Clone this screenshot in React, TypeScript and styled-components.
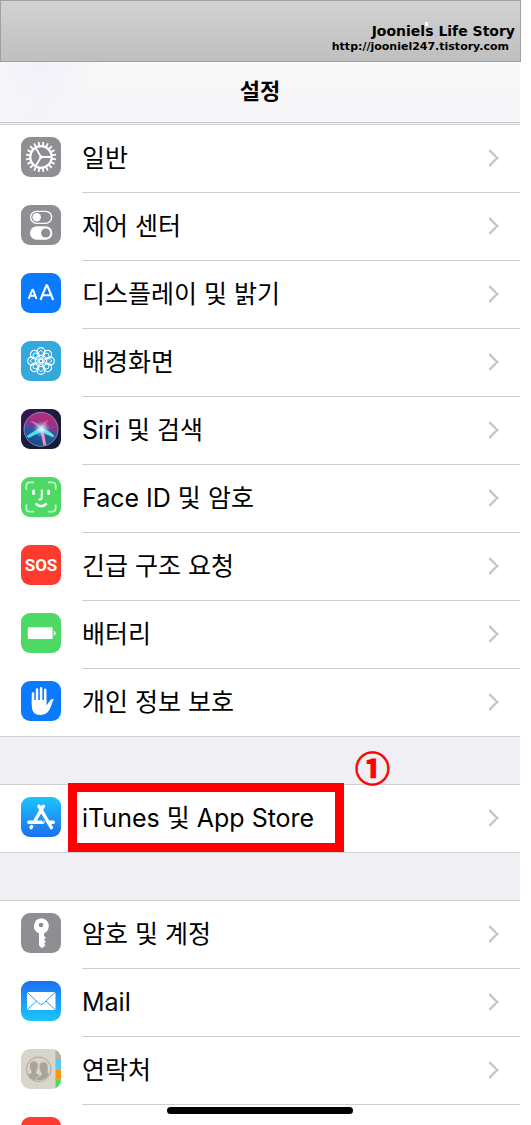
import React from "react";
import styled, { createGlobalStyle } from "styled-components";

const GlobalStyle = createGlobalStyle`
  * { box-sizing: border-box; }
  body {
    margin: 0;
    background: #ffffff;
    font-family: Inter, "Noto Sans CJK KR", sans-serif;
    color: #000000;
  }
`;

const Page = styled.div`
  height: 100vh;
  overflow: hidden;
  padding-right: 10px;
`;

const Banner = styled.header`
  height: 62px;
  padding: 22px 5px 0 0;
  border: 1px solid #a0a0a0;
  background: linear-gradient(#d2d2d2, #bfbfbf);
  font-family: "DejaVu Sans", sans-serif;
  font-weight: 700;
  text-align: right;
`;

const BlogName = styled.div`
  font-size: 14px;
  line-height: 17px;
`;

const Speck = styled.span`
  position: relative;
  &::before {
    content: "";
    position: absolute;
    top: -1px;
    left: 0;
    width: 3px;
    height: 4px;
    background: #ffffff;
  }
`;

const BlogUrl = styled.a`
  display: block;
  padding-right: 6px;
  font-size: 11px;
  line-height: 14px;
  color: inherit;
  text-decoration: none;
`;

const Screen = styled.main`
  position: relative;
  height: calc(100% - 62px);
  margin-right: 1px;
  overflow: hidden;
  background: #efeff4;
`;

const TitleBar = styled.div`
  display: flex;
  align-items: center;
  justify-content: center;
  height: 61px;
  padding-bottom: 2px;
  border-bottom: 1px solid #c9c8ce;
  background: radial-gradient(circle at 40px 0, #f2f0fb, rgba(246, 246, 248, 0) 60px), linear-gradient(#f9f9f9, #f5f5f8);
`;

const Title = styled.h1`
  margin: 0;
  font-size: 22px;
  line-height: 32px;
  font-weight: 700;
`;

const Groups = styled.div`
  display: flex;
  flex-direction: column;
  gap: 47px;
  padding-top: 1px;
`;

const Group = styled.ul`
  margin: 0;
  padding: 0;
  list-style: none;
  border: solid #d0cfd4;
  border-width: 1px 0;
  background: #ffffff;
`;

const Item = styled.li`
  position: relative;
`;

const RowLink = styled.a`
  display: flex;
  padding-left: 21px;
  gap: 21px;
  color: inherit;
  text-decoration: none;
`;

const IconTile = styled.svg`
  flex: none;
  width: 40px;
  height: 40px;
  margin-top: 12px;
  border-radius: 9px;
`;

const RowBody = styled.span`
  display: flex;
  flex: 1;
  align-items: center;
  justify-content: space-between;
  height: 68px;
  padding: 0 21px 2px 0;
  border-bottom: 1px solid #d0cfd4;
  ${Item}:last-child & {
    height: 67px;
    border-bottom: 0;
  }
`;

const Label = styled.span`
  font-size: 25px;
  line-height: 32px;
  white-space: nowrap;
`;

const Highlight = styled.span`
  position: absolute;
  top: -2px;
  left: 68px;
  width: 276px;
  height: 69px;
  border: 9px solid #ff0000;
`;

const StepMark = styled.span`
  position: absolute;
  top: -38px;
  left: 355px;
  color: #ff0000;
  font-family: "Noto Sans CJK KR", sans-serif;
  font-size: 35px;
  font-weight: 700;
  line-height: 40px;
  -webkit-text-stroke: 1px #ff0000;
`;

const HomeBar = styled.div`
  position: absolute;
  bottom: 11px;
  left: 50%;
  width: 186px;
  height: 7px;
  border-radius: 4px;
  background: #000000;
  transform: translateX(-50%);
`;

const Chevron = () => (
  <svg width="11" height="18" viewBox="0 0 11 18" fill="none" stroke="#c5c5ca" strokeWidth="2.4" aria-hidden="true">
    <path d="M1.3 1.2 9.3 9l-8 7.8" />
  </svg>
);

const spokes = (count: number) => Array.from({ length: count }, (_, i) => (360 / count) * i);

const Tile = ({ fill, children }: { fill: string; children?: React.ReactNode }) => (
  <IconTile viewBox="0 0 40 40" aria-hidden="true">
    <rect width="40" height="40" fill={fill} />
    {children}
  </IconTile>
);

const GeneralIcon = () => (
  <Tile fill="#8e8e93">
    <g stroke="#fff" fill="none">
      <circle cx="20" cy="20" r="10.8" strokeWidth="2.2" />
      {spokes(20).map((a) => (
        <path key={a} d="M20 9.5V4.800" strokeWidth="1.8" transform={`rotate(${a + 9} 20 20)`} />
      ))}
      <path d="M20 20h11M20 20l-5.5-9.5M20 20l-5.5 9.5" strokeWidth="1.8" />
      <circle cx="20" cy="20" r="1.2" fill="#fff" />
    </g>
  </Tile>
);

const ControlIcon = () => (
  <Tile fill="#8e8e93">
    <rect x="9.6" y="6.3" width="21" height="12" rx="6" fill="none" stroke="#fff" strokeWidth="1.3" />
    <circle cx="15.7" cy="12.3" r="4.2" fill="#fff" />
    <rect x="9" y="21.2" width="22.4" height="13.6" rx="6.8" fill="#fff" />
    <circle cx="24.7" cy="28" r="4.6" fill="#8e8e93" />
  </Tile>
);

const DisplayIcon = () => (
  <Tile fill="#0a7aff">
    <g fill="none" stroke="#fff" strokeLinejoin="round">
      <path d="M7.700 25.800 11.300 16.600h.6l3.600 9.200M9 22.800h5.200" strokeWidth="1.9" />
      <path d="M19.400 27 25.400 12.300h.8L32.200 27M21.400 22.200h8.800" strokeWidth="2.100" />
    </g>
  </Tile>
);

const WallpaperIcon = () => (
  <Tile fill="#34aadc">
    <g fill="none" stroke="#fff">
      {spokes(8).map((a) => (
        <g key={a} transform={`rotate(${a} 20 20)`}>
          <circle cx="20" cy="10.6" r="3.9" strokeWidth="1.2" />
          <ellipse cx="20" cy="14" rx="2.5" ry="4.4" strokeWidth="0.9" />
        </g>
      ))}
      <circle cx="20" cy="20" r="2" strokeWidth="1" />
    </g>
  </Tile>
);

const SiriIcon = () => (
  <Tile fill="url(#siriBase)">
    <defs>
      <linearGradient id="siriBase" x1="0" y1="0" x2="1" y2="1">
        <stop offset="0" stopColor="#431157" />
        <stop offset="0.5" stopColor="#1c1b3f" />
        <stop offset="1" stopColor="#121b35" />
      </linearGradient>
      <linearGradient id="siriOrb" x1="0.65" y1="0" x2="0.35" y2="1">
        <stop offset="0" stopColor="#c42a71" />
        <stop offset="0.4" stopColor="#90308d" />
        <stop offset="0.6" stopColor="#275aa5" />
        <stop offset="1" stopColor="#164a84" />
      </linearGradient>
      <radialGradient id="siriGlow">
        <stop offset="0" stopColor="#fff" />
        <stop offset="0.25" stopColor="#d3f4ff" stopOpacity="0.8" />
        <stop offset="1" stopColor="#59cbe8" stopOpacity="0" />
      </radialGradient>
    </defs>
    <circle cx="20" cy="20.3" r="17" fill="url(#siriOrb)" stroke="#8c91b5" strokeWidth="0.9" />
    <path d="M20 20 9 12q8 0 12 8z" fill="#df80b2" opacity="0.8" />
    <path d="M20 20q1-8 7-9-1 6-6 9z" fill="#ed4d86" opacity="0.9" />
    <path d="M20 20q8-6 15-2-7 4-15 2z" fill="#77519e" opacity="0.8" />
    <path d="M20 18 5.500 27l2.300 2L21.500 22z" fill="#45e4e6" />
    <path d="M20 19q9 2 13.500 8.500l-2.400.6q-7-3-11.600-7z" fill="#5cead2" />
    <path d="M19 20h3.200L25.300 36l-3 .6z" fill="#f48ac0" />
    <circle cx="20.500" cy="20" r="8.500" fill="url(#siriGlow)" />
  </Tile>
);

const FaceIcon = () => (
  <Tile fill="#4cd964">
    <g fill="none" stroke="#fff" strokeLinecap="round">
      <path d="M5.300 12V9q0-3.700 3.700-3.700h3.500M27.500 5.300H31q3.700 0 3.700 3.700v3M34.700 28v3q0 3.700-3.700 3.700h-3.500M12.500 34.700H9q-3.700 0-3.700-3.700v-3" strokeWidth="1.700" opacity="0.7" />
      <path d="M12.600 14v2.500M27.600 14v2.500" strokeWidth="3" />
      <path d="M20.800 13.500v7q0 1.900-2.300 1.900" strokeWidth="2" />
      <path d="M15.300 27q5 4.400 9.800 0" strokeWidth="2.400" />
    </g>
  </Tile>
);

const SosIcon = () => (
  <Tile fill="#ff3b30">
    <text x="20" y="26" textAnchor="middle" fontFamily="Roboto, sans-serif" fontSize="17" fontWeight="700" fill="#fff">
      SOS
    </text>
  </Tile>
);

const BatteryIcon = () => (
  <Tile fill="#4cd964">
    <rect x="6.800" y="14.300" width="24.800" height="11.800" rx="1" fill="#fff" />
    <path d="M32.800 17.800q1.800.3 1.800 2.400t-1.800 2.400z" fill="#fff" />
  </Tile>
);

const PrivacyIcon = () => (
  <Tile fill="#0a7aff">
    <g fill="none" stroke="#fff" strokeLinecap="round" strokeWidth="2.500">
      <path d="M12 23V12.500M16 20V8.500M20.100 20V7.200M24.200 20V8.800" />
    </g>
    <path d="M10.800 19h14.700v5.500l3.700-5.300q1.600-1.500 3.700-1-1.200 1.700-2.100 4.800-2 6.500-5.100 9.100-2.600 2-6.200 2-8.700-.3-8.700-8.600z" fill="#fff" />
  </Tile>
);

const AppStoreIcon = () => (
  <Tile fill="url(#storeBlue)">
    <defs>
      <linearGradient id="storeBlue" x1="0" y1="0" x2="0" y2="1">
        <stop offset="0" stopColor="#1cc5fb" />
        <stop offset="1" stopColor="#1c6ff2" />
      </linearGradient>
    </defs>
    <g fill="none" stroke="#fff" strokeLinecap="round" strokeWidth="3.400">
      <path d="M22.400 9.200 13.200 25M10.600 29.500l-.6 1.100M18 9.200l12.400 21.400M7.800 25.200h14.500M28.500 25.200h3.900" />
    </g>
    <path d="m19 18.900 4.600 8" stroke="#229bf7" strokeWidth="1" />
  </Tile>
);

const KeyIcon = () => (
  <Tile fill="#8e8e93">
    <path
      fill="#fff"
      fillRule="evenodd"
      d="M20 5.200a7.900 7.900 0 0 1 3 15.200v2.500l1.900 1.900-1.900 1.900 1.900 2-1.900 1.900 1.500 1.700-3.600 2.900-2.900-2.600V20.400A7.900 7.900 0 0 1 20 5.200zm0 4.500a2.300 2.300 0 1 0 0 4.600 2.300 2.300 0 0 0 0-4.600z"
    />
  </Tile>
);

const MailIcon = () => (
  <Tile fill="url(#mailBlue)">
    <defs>
      <linearGradient id="mailBlue" x1="0" y1="0" x2="0" y2="1">
        <stop offset="0" stopColor="#1d6ff2" />
        <stop offset="1" stopColor="#1bc6fc" />
      </linearGradient>
    </defs>
    <rect x="6" y="11" width="28.500" height="18" rx="1.500" fill="#fff" />
    <path d="m6.500 11.500 11.600 11q2.200 2 4.300 0l11.600-11M6.500 28.500l9-8.500M34 28.500 25 20" fill="none" stroke="#2b9bf4" strokeWidth="1" />
  </Tile>
);

const ContactsIcon = () => (
  <Tile fill="#d8d5cb">
    <path d="M35 0h5v10h-5z" fill="#b8b3aa" />
    <path d="M35 10h5v10.500h-5z" fill="#5ac8fa" />
    <path d="M35 20.500h5v10h-5z" fill="#ff9511" />
    <path d="M35 30.500h5V40h-5z" fill="#4cd964" />
    <path d="M34.500 0v40" stroke="#bcb8ae" strokeWidth="0.8" />
    <circle cx="17.700" cy="20.300" r="12.300" fill="none" stroke="#aaa49b" strokeWidth="1" />
    <path
      d="M12.800 12.200q4.100 0 4.100 5 0 3.600-1.900 5.500v1.500l3.500 2-4.500 4.300v1Q9 29.500 7 25.500q3.500-.7 3.700-2.800-2-2-1.900-5.500 0-5 4-5z"
      fill="#aaa49b"
    />
    <path
      d="M22 12.900q5 0 5 5.300 0 3.600-.3 5.400 1 .9 2 1.100-2.500 6.300-10 7.100-2.500 0-4.200-.8.400-3 4.500-4.200 1.700-.6 1.600-2.400-2.200-2-2.500-6.400.2-5.100 3.900-5.100z"
      fill="#aaa49b"
      stroke="#d8d5cb"
      strokeWidth="0.6"
    />
  </Tile>
);

const CalendarIcon = () => <Tile fill="#ff3b30" />;

type Entry = { label: string; Icon: () => React.ReactElement; marked?: boolean };

const groups: Entry[][] = [
  [
    { label: "일반", Icon: GeneralIcon },
    { label: "제어 센터", Icon: ControlIcon },
    { label: "디스플레이 및 밝기", Icon: DisplayIcon },
    { label: "배경화면", Icon: WallpaperIcon },
    { label: "Siri 및 검색", Icon: SiriIcon },
    { label: "Face ID 및 암호", Icon: FaceIcon },
    { label: "긴급 구조 요청", Icon: SosIcon },
    { label: "배터리", Icon: BatteryIcon },
    { label: "개인 정보 보호", Icon: PrivacyIcon },
  ],
  [{ label: "iTunes 및 App Store", Icon: AppStoreIcon, marked: true }],
  [
    { label: "암호 및 계정", Icon: KeyIcon },
    { label: "Mail", Icon: MailIcon },
    { label: "연락처", Icon: ContactsIcon },
    { label: "", Icon: CalendarIcon },
  ],
];

export default function App() {
  return (
    <Page>
      <GlobalStyle />
      <Banner>
        <BlogName>
          Jooniel<Speck>s</Speck> Life Story
        </BlogName>
        <BlogUrl href="#blog">http://jooniel247.tistory.com</BlogUrl>
      </Banner>
      <Screen>
        <TitleBar>
          <Title>설정</Title>
        </TitleBar>
        <Groups>
          {groups.map((entries, g) => (
            <Group key={g}>
              {entries.map(({ label, Icon, marked }, i) => (
                <Item key={i}>
                  <RowLink href="#settings">
                    <Icon />
                    <RowBody>
                      <Label>{label}</Label>
                      <Chevron />
                    </RowBody>
                  </RowLink>
                  {marked && <Highlight />}
                  {marked && <StepMark>①</StepMark>}
                </Item>
              ))}
            </Group>
          ))}
        </Groups>
        <HomeBar />
      </Screen>
    </Page>
  );
}
